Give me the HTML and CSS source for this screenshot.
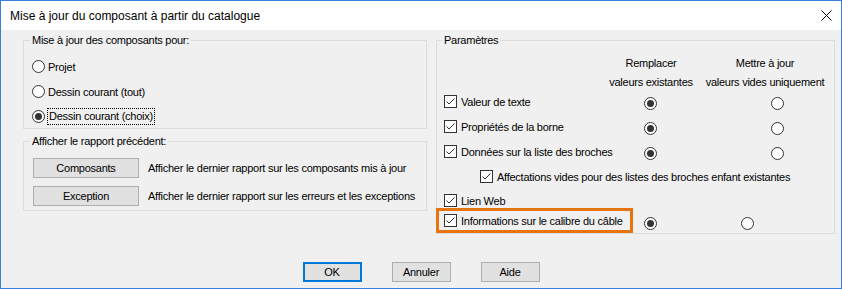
FILE: index.html
```html
<!DOCTYPE html>
<html lang="fr">
<head>
<meta charset="utf-8">
<title>Mise à jour du composant à partir du catalogue</title>
<link rel="stylesheet" href="styles.css">
</head>
<body>
<div class="window">
    <div class="titlebar">
        <span class="title">Mise à jour du composant à partir du catalogue</span>
        <span class="close">
            <svg width="11" height="11" viewBox="0 0 11 11"><path d="M0.5 0.5L10.5 10.5M10.5 0.5L0.5 10.5" stroke="#000" stroke-width="1" fill="none"/></svg>
        </span>
    </div>
    <div class="content">
        <div class="left">
            <fieldset class="group group-scope">
                <legend>Mise à jour des composants pour:</legend>
                <label class="option"><span class="radio"></span>Projet</label>
                <label class="option"><span class="radio"></span>Dessin courant (tout)</label>
                <label class="option"><span class="radio on"></span><span class="focus">Dessin courant (choix)</span></label>
            </fieldset>
            <fieldset class="group group-report">
                <legend>Afficher le rapport précédent:</legend>
                <div class="report-row">
                    <button class="btn btn-wide">Composants</button>
                    <span>Afficher le dernier rapport sur les composants mis à jour</span>
                </div>
                <div class="report-row">
                    <button class="btn btn-wide">Exception</button>
                    <span>Afficher le dernier rapport sur les erreurs et les exceptions</span>
                </div>
            </fieldset>
        </div>
        <fieldset class="group group-params">
            <legend>Paramètres</legend>
            <div class="params-head">
                <div class="head-col">Remplacer<br>valeurs existantes</div>
                <div class="head-col head-col2">Mettre à jour<br>valeurs vides uniquement</div>
            </div>
            <div class="param-row row-a">
                <label class="check-label"><span class="checkbox"><svg width="11" height="11" viewBox="0 0 11 11"><path d="M1.5 5.5L4 8L9.5 2.5" fill="none" stroke="#333" stroke-width="1"/></svg></span>Valeur de texte</label>
                <span class="radio on"></span>
                <span class="radio col2"></span>
            </div>
            <div class="param-row row-a">
                <label class="check-label"><span class="checkbox"><svg width="11" height="11" viewBox="0 0 11 11"><path d="M1.5 5.5L4 8L9.5 2.5" fill="none" stroke="#333" stroke-width="1"/></svg></span>Propriétés de la borne</label>
                <span class="radio on"></span>
                <span class="radio col2"></span>
            </div>
            <div class="param-row row-a">
                <label class="check-label"><span class="checkbox"><svg width="11" height="11" viewBox="0 0 11 11"><path d="M1.5 5.5L4 8L9.5 2.5" fill="none" stroke="#333" stroke-width="1"/></svg></span>Données sur la liste des broches</label>
                <span class="radio on"></span>
                <span class="radio col2"></span>
            </div>
            <div class="param-row row-b">
                <label class="check-label child"><span class="checkbox"><svg width="11" height="11" viewBox="0 0 11 11"><path d="M1.5 5.5L4 8L9.5 2.5" fill="none" stroke="#333" stroke-width="1"/></svg></span>Affectations vides pour des listes des broches enfant existantes</label>
            </div>
            <div class="param-row row-c">
                <label class="check-label"><span class="checkbox"><svg width="11" height="11" viewBox="0 0 11 11"><path d="M1.5 5.5L4 8L9.5 2.5" fill="none" stroke="#333" stroke-width="1"/></svg></span>Lien Web</label>
            </div>
            <div class="param-row row-c">
                <label class="check-label highlight"><span class="checkbox"><svg width="11" height="11" viewBox="0 0 11 11"><path d="M1.5 5.5L4 8L9.5 2.5" fill="none" stroke="#333" stroke-width="1"/></svg></span>Informations sur le calibre du câble</label>
                <span class="radio on last1"></span>
                <span class="radio last2"></span>
            </div>
        </fieldset>
    </div>
    <div class="footer">
        <button class="btn btn-small default">OK</button>
        <button class="btn btn-small">Annuler</button>
        <button class="btn btn-small">Aide</button>
    </div>
</div>
</body>
</html>
```

FILE: styles.css
```css
* {
    margin: 0;
    padding: 0;
    box-sizing: border-box;
}

body {
    font-family: 'Liberation Sans', Arial, sans-serif;
    font-size: 11px;
    letter-spacing: -0.25px;
    color: #000;
    background: #fff;
}

.window {
    width: 842px;
    height: 289px;
    border: 1px solid #3a7fe0;
    background: #f0f0f0;
    display: flex;
    flex-direction: column;
}

.titlebar {
    height: 29px;
    background: #fff;
    display: flex;
    align-items: center;
    padding-left: 9px;
}

.title {
    font-size: 12px;
    letter-spacing: 0;
}

.close {
    margin-left: auto;
    width: 30px;
    height: 29px;
    display: flex;
    align-items: center;
    justify-content: center;
}

.content {
    display: flex;
    gap: 9px;
    padding: 4px 6px 0 22px;
}

.left {
    width: 404px;
    display: flex;
    flex-direction: column;
}

.group {
    border: 1px solid #dcdcdc;
    min-width: 0;
}

.group legend {
    padding: 0 2px;
    line-height: 13px;
}

.group-scope {
    height: 95px;
    padding: 7px 0 0 8px;
}

.group-scope legend {
    margin-left: -2px;
}

.group-report {
    height: 76px;
    margin-top: 6px;
    padding: 10px 0 0 9px;
}

.group-report legend {
    margin-left: -3px;
}

.group-params {
    width: 399px;
    height: 200px;
    padding: 0;
}

.group-params legend {
    margin-left: 5px;
}

/* radio and checkbox */
.option {
    height: 25px;
    display: flex;
    align-items: center;
    gap: 3px;
}

.radio {
    width: 13px;
    height: 13px;
    flex: 0 0 13px;
    border: 1px solid #333;
    border-radius: 50%;
    background: #fff;
    display: grid;
    place-items: center;
}

.radio.on::after {
    content: "";
    width: 7px;
    height: 7px;
    border-radius: 50%;
    background: #333;
}

.focus {
    outline: 1px dotted #000;
    padding: 1px 1px 2px;
}

.checkbox {
    width: 13px;
    height: 13px;
    flex: 0 0 13px;
    border: 1px solid #333;
    background: #fff;
    display: block;
}

.checkbox svg {
    display: block;
}

.check-label {
    display: flex;
    align-items: center;
    gap: 4px;
    width: 200px;
    flex: 0 0 200px;
    white-space: nowrap;
    margin-top: 3px;
}

.check-label.child {
    margin-left: 36px;
    width: auto;
    flex: none;
}

/* report buttons */
.report-row {
    display: flex;
    align-items: center;
    gap: 9px;
    margin-bottom: 8px;
}

.btn {
    font-family: 'Liberation Sans', Arial, sans-serif;
    font-size: 11px;
    letter-spacing: -0.25px;
    color: #000;
    background: #e1e1e1;
    border: 1px solid #adadad;
    height: 20px;
}

.btn-wide {
    width: 106px;
}

.btn-small {
    width: 59px;
}

.btn.default {
    border: 2px solid #0078d7;
}

/* parameters */
.params-head {
    display: flex;
    padding: 7px 0 0 164px;
    line-height: 19px;
    text-align: center;
}

.head-col {
    width: 100px;
}

.head-col2 {
    width: 128px;
}

.param-row {
    display: flex;
    align-items: flex-start;
    padding-left: 7px;
}

.row-a {
    height: 25px;
}

.row-b {
    height: 24px;
}

.row-c {
    height: 21px;
}

.param-row .radio {
    margin-top: 5px;
}

.param-row .col2 {
    margin-left: 114px;
}

.param-row .last2 {
    margin-left: 84px;
}

.highlight {
    outline: 3px solid #e8740f;
    margin-left: -5px;
    padding: 3px 7px 3px 5px;
    margin-top: -1px;
    width: 191px;
    flex: 0 0 191px;
    margin-right: 14px;
}

.footer {
    margin-top: auto;
    display: flex;
    justify-content: center;
    gap: 30px;
    padding-bottom: 6px;
}
```
